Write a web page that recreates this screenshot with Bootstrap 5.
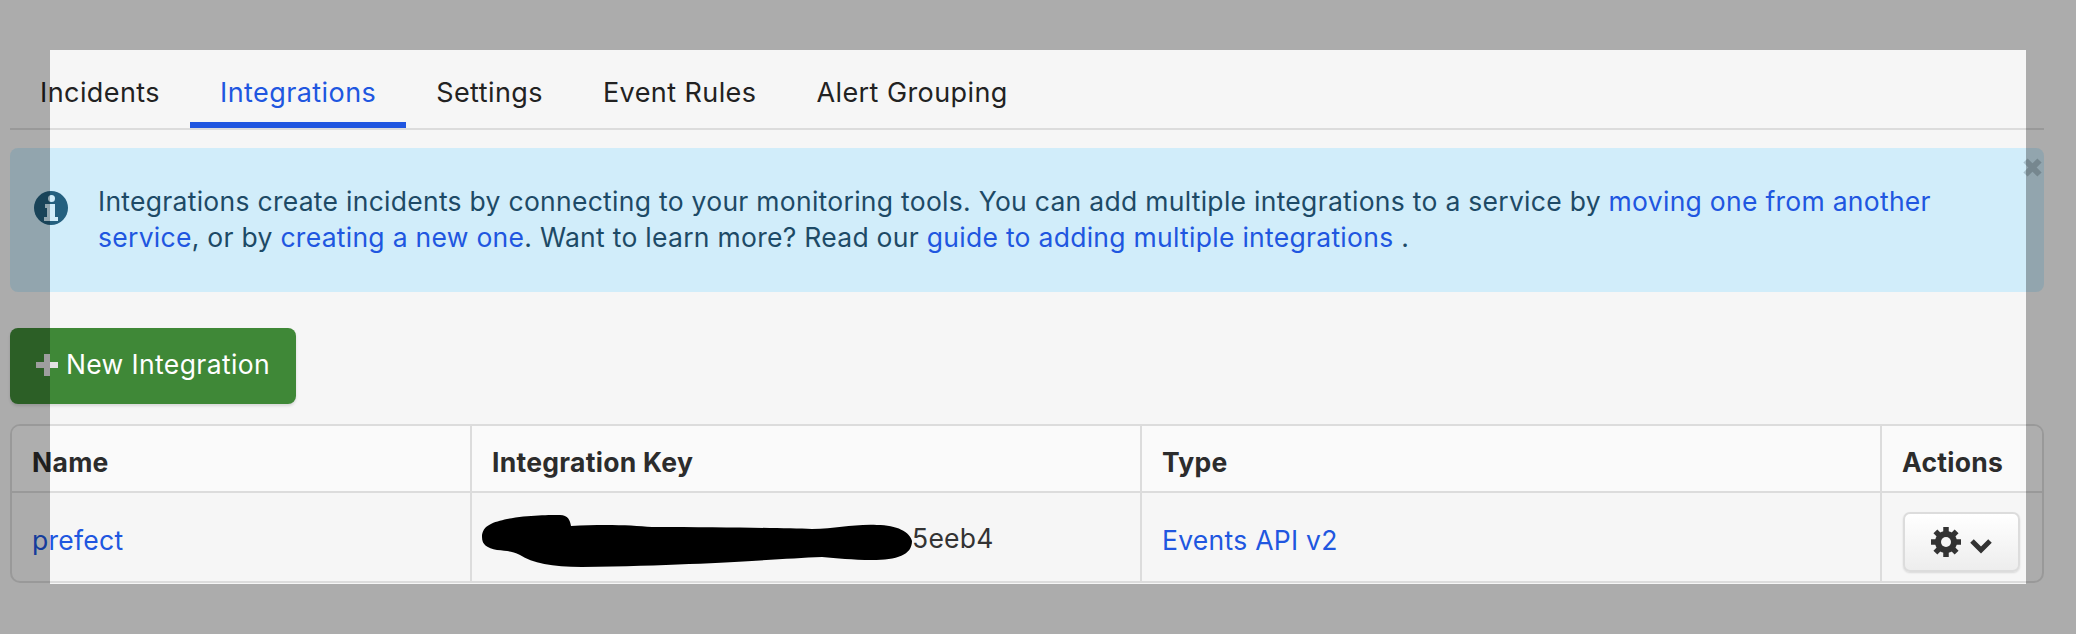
<!DOCTYPE html>
<html lang="en">
<head>
<meta charset="utf-8">
<title>Integrations</title>
<link href="https://cdn.jsdelivr.net/npm/bootstrap@5.3.0/dist/css/bootstrap.min.css" rel="stylesheet">
<style>
html,body{height:634px;overflow:hidden}
body{background:#f6f6f6;font-family:"Inter","Liberation Sans",sans-serif;font-size:26.5px;letter-spacing:.28px;color:#333;position:relative}
.page-wrap{padding:0 32px 0 10px}
a{color:#2056e0;text-decoration:none}
.tab-bar{height:130px;padding-top:50px;border-bottom:2px solid #dcdcdc}
.tab-item{height:78px;padding:14px 30px 0;display:flex;align-items:center;font-size:27px;letter-spacing:.42px}
.tab-item.nav-link{color:#222;border-bottom:6px solid transparent}
.tab-item.nav-link.on{color:#2056e0;border-bottom-color:#2056e0}
.info-box{margin-top:18px;height:144px;background:#d1edfa;border-radius:8px;padding:0 60px 3px 88px;color:#1d4a66;line-height:36px;position:relative}
.info-icon{position:absolute;left:24px;top:43px}
.info-shut{position:absolute;right:2px;top:10px;width:19px;height:19px}
.add-btn{margin-top:36px;height:76px;width:286px;background:#3f8837;border:0;border-radius:8px;color:#fff;font-size:26.5px;letter-spacing:.38px;box-shadow:0 2px 3px rgba(0,0,0,.12);gap:8px;padding:0 0 2px}
.add-btn:hover{background:#3f8837;color:#fff}
.grid-wrap{margin-top:20px;border:2px solid #dcdcdc;border-radius:10px;overflow:hidden}
.grid-tbl{margin:0;table-layout:fixed;--bs-table-bg:transparent;border-collapse:collapse}
.grid-tbl th,.grid-tbl td{padding:0 20px;vertical-align:middle;border:0;border-right:2px solid #dcdcdc;color:#333;font-size:26.5px}
.grid-tbl tr>*:last-child{border-right:0}
.grid-tbl th{height:66px;padding-top:8px;background:#fafafa;font-weight:700;border-bottom:2px solid #dcdcdc;color:#2c2c2c}
.grid-tbl td{height:89px;padding-top:8px}
.grid-tbl td a{color:#2056e0}
.key-cell{white-space:nowrap}
.key-cell svg{vertical-align:middle;margin:2px 0 0 -10px}
.gear-btn{width:117px;height:60px;background:linear-gradient(#fff,#ededed);border:2px solid #dcdcdc;border-radius:7px;box-shadow:0 1px 2px rgba(0,0,0,.12);padding:0;gap:8px;margin:1px 0 0 1px}
.spot-light{position:absolute;left:50px;top:50px;width:1976px;height:534px;box-shadow:0 0 0 3000px rgba(0,0,0,.3);pointer-events:none}
</style>
</head>
<body>
<div class="page-wrap">
  <ul class="nav tab-bar">
    <li class="nav-item"><a class="nav-link tab-item" href="#">Incidents</a></li>
    <li class="nav-item"><a class="nav-link tab-item on" href="#">Integrations</a></li>
    <li class="nav-item"><a class="nav-link tab-item" href="#">Settings</a></li>
    <li class="nav-item"><a class="nav-link tab-item" href="#">Event Rules</a></li>
    <li class="nav-item"><a class="nav-link tab-item" href="#">Alert Grouping</a></li>
  </ul>

  <div class="info-box d-flex align-items-center">
    <svg class="info-icon" width="34" height="34" viewBox="0 0 34 34" aria-hidden="true">
      <circle cx="17" cy="17" r="17" fill="#24607f"/>
      <circle cx="17.500" cy="7.500" r="3.500" fill="#d1edfa"/>
      <path d="M11 13h10v13h3v4H10v-4h3v-9h-2z" fill="#d1edfa"/>
    </svg>
    <div>Integrations create incidents by connecting to your monitoring tools. You can add multiple integrations to a service by <a href="#">moving one from another service</a>, or by <a href="#">creating a new one</a>. Want to learn more? Read our <a href="#">guide to adding multiple integrations</a> .</div>
    <svg class="info-shut" viewBox="0 0 19 19" aria-hidden="true"><path d="M2.500 2.500L16.500 16.500M16.500 2.500L2.500 16.500" stroke="#a9c2cd" stroke-width="6"/></svg>
  </div>

  <button class="btn add-btn d-flex align-items-center justify-content-center" type="button">
    <svg width="22" height="22" viewBox="0 0 22 22" aria-hidden="true"><path d="M8 0h6v8h8v6h-8v8H8v-8H0V8h8z" fill="#e2e2e2"/></svg>
    <span>New Integration</span>
  </button>

  <div class="grid-wrap">
    <table class="table grid-tbl">
      <colgroup><col style="width:459px"><col style="width:670px"><col style="width:740px"><col></colgroup>
      <thead><tr><th>Name</th><th>Integration Key</th><th>Type</th><th>Actions</th></tr></thead>
      <tbody>
        <tr>
          <td><a href="#">prefect</a></td>
          <td class="key-cell"><svg width="430" height="54" viewBox="0 0 430 54" aria-hidden="true"><path d="M0 22C0 10 12 7 25 4C45 0 70 0 78 0C86 0 88 5 89 11C120 9 150 10 170 12C240 12 300 13 330 14C355 14 370 9 395 10C415 10 428 17 430 26C430 40 415 45 390 45C370 45 355 43 340 42C290 44 230 50 100 52C70 52 50 48 38 40C30 36 25 36 15 35C5 33 0 30 0 22Z" fill="#000"/></svg>5eeb4</td>
          <td><a href="#">Events API v2</a></td>
          <td>
            <button class="btn gear-btn d-inline-flex align-items-center justify-content-center" type="button" aria-label="Actions">
              <svg width="30" height="30" viewBox="0 0 30 30" aria-hidden="true"><circle cx="15" cy="15" r="11" fill="#333"/><path d="M15 0v30M0 15h30M4.400 4.400l21.200 21.200M25.600 4.400L4.400 25.600" stroke="#333" stroke-width="5.500"/><circle cx="15" cy="15" r="5" fill="#f6f6f6"/></svg>
              <svg width="24" height="18" viewBox="0 0 24 18" style="margin-top:8px" aria-hidden="true"><path d="M3 4l9 9 9-9" fill="none" stroke="#333" stroke-width="5"/></svg>
            </button>
          </td>
        </tr>
      </tbody>
    </table>
  </div>
</div>
<div class="spot-light"></div>
</body>
</html>
